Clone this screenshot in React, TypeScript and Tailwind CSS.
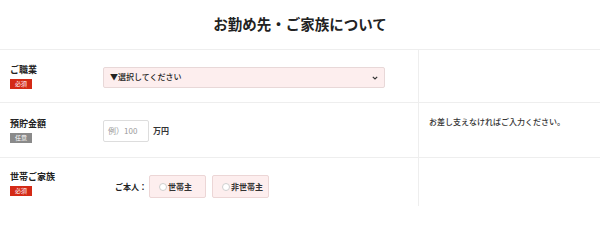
import React from 'react';

const jp = { fontFamily: '"Noto Sans CJK JP", "Noto Sans", sans-serif' };

const Badge: React.FC<{ required?: boolean }> = ({ required }) => (
    <span
        className={`mt-[4px] flex h-[10px] w-[22px] items-center justify-center text-[6px] leading-none text-white ${required ? 'bg-[#d42a16]' : 'bg-[#8a8a8a]'}`}
    >
        {required ? '必須' : '任意'}
    </span>
);

const Label: React.FC<{ text: string; required?: boolean }> = ({ text, required }) => (
    <div className="flex w-[95px] shrink-0 flex-col items-start pl-[10px]">
        <span className="text-[9px] font-bold leading-[11px] text-[#222]">{text}</span>
        <Badge required={required} />
    </div>
);

const Radio: React.FC<{ label: string }> = ({ label }) => (
    <label className="flex h-[23px] w-[57px] items-center rounded-[2px] border border-[#ecd6d6] bg-[#fdeeee] pl-[9px]">
        <span className="h-[8px] w-[8px] rounded-full border border-[#cfcfcf] bg-white" />
        <span className="ml-[1px] text-[8px] leading-none font-bold text-[#333]">{label}</span>
    </label>
);

export default function App() {
    return (
        <div className="h-[206px] w-[600px] overflow-hidden bg-white leading-none" style={jp}>
            <div className="flex h-[49px] items-center justify-center">
                <h2 className="text-[14.5px] font-bold text-[#222]">お勤め先・ご家族について</h2>
            </div>
            <div className="border-t border-[#eeeeee]">
                <div className="flex h-[53px] border-b border-[#eeeeee]">
                    <div className="flex w-[419px] items-center border-r border-[#eeeeee]">
                        <Label text="ご職業" required />
                        <div className="pl-[8px] pt-[2px]">
                            <div className="relative flex h-[21px] w-[282px] items-center rounded-[2px] border border-[#e8d8d8] bg-[#fdeeee] pl-[6px]">
                                <span className="text-[8px] font-medium text-[#222]">▼選択してください</span>
                                <svg className="absolute right-[6px] top-[8px]" width="6" height="4" viewBox="0 0 6 4">
                                    <path d="M0.8 0.8 L3 3 L5.2 0.8" fill="none" stroke="#333" strokeWidth="1.2" />
                                </svg>
                            </div>
                        </div>
                    </div>
                    <div className="flex-1" />
                </div>
                <div className="flex h-[55px] items-start border-b border-[#eeeeee]">
                    <div className="flex h-full w-[419px] items-center border-r border-[#eeeeee]">
                        <Label text="預貯金額" />
                        <div className="flex items-center pl-[8px] pt-[2px]">
                            <div className="flex h-[22px] w-[46px] items-center rounded-[2px] border border-[#dddddd] bg-white pl-[4px]">
                                <span className="text-[8px] text-[#9a9a9a]">例）100</span>
                            </div>
                            <span className="ml-[4px] text-[8px] font-bold text-[#333]">万円</span>
                        </div>
                    </div>
                    <p className="flex-1 pl-[10px] pt-[14px] text-[8px] leading-[10px] font-medium text-[#333]">
                        お差し支えなければご入力ください。
                    </p>
                </div>
                <div className="flex h-[60px]">
                    <div className="flex w-[419px] items-start border-r border-[#eeeeee]">
                        <div className="pt-[13px]">
                            <Label text="世帯ご家族" required />
                        </div>
                        <div className="flex items-center pl-[20px] pt-[17px]">
                            <span className="mr-[2px] text-[8px] font-bold text-[#222]">ご本人：</span>
                            <div className="flex gap-[6px]">
                                <Radio label="世帯主" />
                                <Radio label="非世帯主" />
                            </div>
                        </div>
                    </div>
                    <div className="flex-1" />
                </div>
            </div>
        </div>
    );
}
